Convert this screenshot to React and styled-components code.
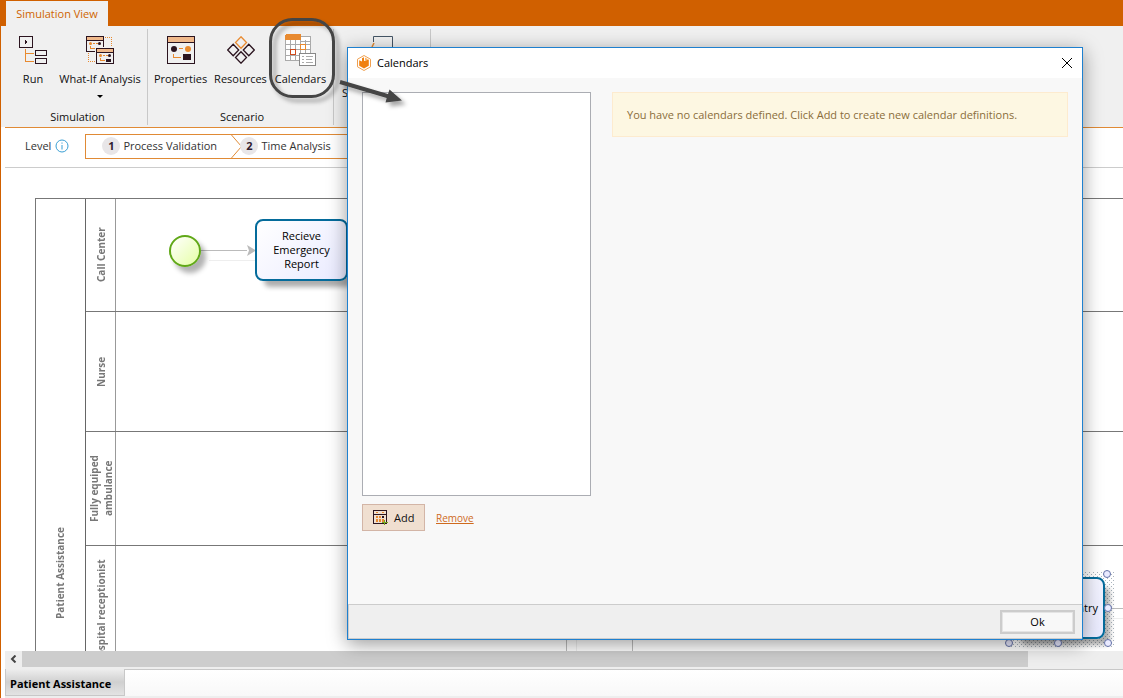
import React from 'react'
import styled, { createGlobalStyle, css } from 'styled-components'

const GlobalStyle = createGlobalStyle`
  * {
    box-sizing: border-box;
  }
  body {
    margin: 0;
    font-family: 'Open Sans', 'Noto Sans', sans-serif;
    font-size: 11px;
    line-height: 14px;
    color: #111;
    background: #fff;
  }
  button {
    font: inherit;
    color: inherit;
    padding: 0;
    border: 0;
    background: none;
  }
  svg {
    display: block;
  }
`

const Window = styled.div`
  position: relative;
  display: flex;
  flex-direction: column;
  height: 100vh;
  overflow: hidden;
  border-left: 1px solid #d06000;
`

const TitleBar = styled.header`
  display: flex;
  flex: none;
  align-items: flex-end;
  height: 26px;
  padding-left: 5px;
  background: #d06000;
`

const ViewTab = styled.button`
  width: 102px;
  height: 25px;
  background: #f0f0f0;
  color: #cf6400;
`

const Ribbon = styled.nav`
  display: flex;
  flex: none;
  height: 101px;
  padding: 3px 0 2px 4px;
  background: #f0f0f0;
`

const RibbonGroup = styled.section`
  display: flex;
  flex-direction: column;
  justify-content: space-between;
  width: ${props => props.$width}px;
  border-right: 1px solid #c8c8c8;
`

const GroupItems = styled.div`
  display: flex;
  justify-content: center;
`

const GroupName = styled.div`
  padding: 0 0 1px 3px;
  text-align: center;
`

const RibbonButton = styled.button`
  display: flex;
  flex-direction: column;
  align-items: center;
  justify-content: flex-start;
  width: ${props => props.$width}px;
  padding-top: 5px;
  white-space: nowrap;
`

const RibbonIcon = styled.span`
  display: flex;
  align-items: center;
  height: 32px;
`

const RibbonLabel = styled.span`
  margin-top: 6px;
  ${props => props.$second && css`
    align-self: flex-start;
    margin-top: 20px;
    padding-left: 8px;
  `}
`

const Caret = styled.i`
  margin-top: 9px;
  border: 3px solid transparent;
  border-top-color: #000;
  border-bottom: 0;
`

const Body = styled.main`
  display: flex;
  flex: 1;
  flex-direction: column;
  min-height: 0;
  margin-left: 4px;
  border-top: 1px solid #e08a35;
`

const LevelBar = styled.div`
  display: flex;
  flex: none;
  align-items: center;
  height: 40px;
  padding: 0 0 3px 20px;
  border-bottom: 1px solid #ccc;
  color: #333;
`

const Info = styled.button`
  margin: 0 16px 0 4px;
`

const Steps = styled.div`
  display: flex;
  width: 420px;
  height: 25px;
  border: 1px solid #e08a35;
`

const Step = styled.button`
  display: flex;
  align-items: center;
  gap: 3px;
  width: ${props => props.$width}px;
  padding-left: ${props => props.$inset}px;
`

const StepArrow = styled.svg`
  flex: none;
  margin-right: -3px;
`

const StepNumber = styled.b`
  width: 18px;
  height: 18px;
  border-radius: 50%;
  line-height: 18px;
  background: #e8e6e8;
  color: #302030;
`

const Canvas = styled.section`
  position: relative;
  flex: 1;
  min-height: 0;
  padding: 30px 0 0 30px;
  overflow: hidden;
`

const Pool = styled.div`
  display: flex;
  height: 750px;
  border: 1px solid #777;
  border-right: 0;
`

const UprightLabel = styled.div`
  display: flex;
  flex: none;
  align-items: center;
  justify-content: center;
  width: ${props => props.$width}px;
  border-left: 1px solid ${props => props.$edge || 'transparent'};
  writing-mode: vertical-rl;
  transform: rotate(180deg);
  font-size: 10px;
  font-weight: 700;
  text-align: center;
  white-space: pre;
  color: #777;
`

const Lanes = styled.div`
  flex: 1;
  border-left: 1px solid #666;
`

const Lane = styled.div`
  display: flex;
  height: ${props => props.$height}px;
  border-bottom: 1px solid #777;
`

const Flows = styled.svg`
  position: absolute;
  top: 0;
  left: 0;
  width: 100%;
  height: 100%;
`

const StartEvent = styled.div`
  position: absolute;
  left: 164px;
  top: 67px;
  width: 32px;
  height: 32px;
  border: 2px solid #60a817;
  border-radius: 50%;
  background: linear-gradient(135deg, #fff, #e5ffa5);
  box-shadow: 5px 6px 5px rgba(0, 0, 0, 0.3);
`

const Task = styled.div`
  position: absolute;
  left: ${props => props.$left}px;
  top: ${props => props.$top}px;
  display: flex;
  align-items: center;
  justify-content: center;
  width: 93px;
  height: 62px;
  padding: 0 8px;
  border: 2px solid #046b9b;
  border-radius: 8px;
  background: linear-gradient(135deg, #fff, #e9eaff);
  box-shadow: 7px 8px 5px -2px rgba(0, 0, 0, 0.32);
  text-align: center;
  color: #000;
  ${props => props.$end && css`
    justify-content: flex-end;
    padding-right: 5px;
  `}
`

const ScrollBar = styled.div`
  display: flex;
  flex: none;
  height: 16px;
  background: #eee;
`

const ScrollArrow = styled.button`
  display: flex;
  flex: none;
  align-items: center;
  justify-content: center;
  width: 17px;
`

const ScrollThumb = styled.div`
  width: 90%;
  background: #cdcdcd;
`

const SheetTabs = styled.footer`
  display: flex;
  flex: none;
  align-items: flex-start;
  height: 31px;
  padding-top: 2px;
  background: linear-gradient(#eee 2px, #c8c8c8 2px, #c8c8c8 3px, #fff 3px, #f8f8f8 29px, #eee 29px);
`

const SheetTab = styled.button`
  width: 120px;
  height: 27px;
  padding: 4px 0 0 4px;
  border: 1px solid #c8c8c8;
  border-top: 0;
  background: linear-gradient(#eee, #d0d0d0 50%, #e3e3e3);
  font-weight: 700;
  text-align: left;
  color: #000;
`

const Dialog = styled.div`
  position: absolute;
  top: 47px;
  right: 40px;
  bottom: 58px;
  left: 346px;
  display: flex;
  flex-direction: column;
  border: 1px solid #1e80cf;
  background: #f8f8f8;
  box-shadow: 0 4px 18px rgba(0, 0, 0, 0.4);
`

const DialogTitle = styled.div`
  display: flex;
  flex: none;
  align-items: center;
  gap: 6px;
  height: 30px;
  padding: 0 9px;
  background: #fff;
  color: #000;
`

const CloseButton = styled.button`
  margin-left: auto;
`

const DialogBody = styled.div`
  display: flex;
  flex: 1;
  gap: 21px;
  min-height: 0;
  padding: 14px;
`

const CalendarPane = styled.div`
  display: flex;
  flex: none;
  flex-direction: column;
  width: 229px;
  padding-bottom: 59px;
`

const CalendarList = styled.div`
  flex: 1;
  border: 1px solid #abadb3;
  background: #fff;
`

const ListActions = styled.div`
  display: flex;
  align-items: center;
  gap: 11px;
  margin-top: 8px;
`

const AddButton = styled.button`
  display: flex;
  align-items: center;
  gap: 6px;
  width: 63px;
  height: 27px;
  padding-left: 10px;
  border: 1px solid #d3b5a6;
  background: #f0dfd0;
`

const RemoveLink = styled.a`
  font-size: 10px;
  color: #cf6a1d;
`

const Notice = styled.p`
  flex: 1;
  height: 45px;
  margin: 0;
  padding: 15px 14px;
  border: 1px solid #fdebcf;
  background: #fdf7e2;
  color: #8a6d3b;
`

const DialogFooter = styled.div`
  display: flex;
  flex: none;
  justify-content: flex-end;
  height: 35px;
  padding: 5px 7px;
  border: 1px solid #ccc;
  border-right: 0;
  background: #efefef;
`

const OkButton = styled.button`
  width: 75px;
  height: 24px;
  border: 2px solid #ccc;
  outline: 1px solid #e4e4e4;
  outline-offset: -3px;
  background: #f8f8f8;
  color: #000;
`

const Callout = styled.svg`
  position: absolute;
  top: 0;
  left: 259px;
  pointer-events: none;
`

const dark = '#2b141f'
const orange = '#e88a30'

const RunIcon = () => (
  <svg width="28" height="28" viewBox="0 0 28 28" fill="none" stroke={dark} shapeRendering="crispEdges">
    <path d="M.5.5h13v11H.5zM16.500 14.500h11v5h-11zM16.500 22.500h11v5h-11z" />
    <path d="M6 4v4l2-2z" fill={dark} stroke="none" />
    <path d="M6.500 13v12.500H15M6.500 17.500H15" stroke={orange} />
  </svg>
)

const WindowGlyph = () => (
  <>
    <path d="M1 1h16v3H1z" fill="#f0b98b" />
    <path d="M.5.5h17v15H.5zM.5 4.500h17" fill="none" stroke={dark} shapeRendering="crispEdges" />
    <circle cx="4.500" cy="7.500" r="1.500" fill={orange} />
    <circle cx="13.500" cy="7.500" r="1.500" fill={dark} />
    <path d="M7 7.500h2m1 0h2M4.500 10v2.500H9" fill="none" stroke={orange} shapeRendering="crispEdges" />
    <path d="M10 11h5v3h-5z" fill={dark} />
  </>
)

const WhatIfIcon = () => (
  <svg width="28" height="28" viewBox="0 0 28 28">
    <WindowGlyph />
    <path d="M9 11h19v17H9z" fill="#f0f0f0" />
    <g transform="translate(10 12)">
      <WindowGlyph />
    </g>
    <path d="M19 1.500h6.500V11M2.500 17v8.500H9" fill="none" stroke={orange} strokeDasharray="1 1" shapeRendering="crispEdges" />
  </svg>
)

const PropertiesIcon = () => (
  <svg width="28" height="28" viewBox="0 0 28 28">
    <path d="M1 1h26v5H1z" fill="#f0b98b" />
    <path d="M.5.5h27v27H.5zM.5 6.500h27" fill="none" stroke={dark} shapeRendering="crispEdges" />
    <circle cx="7" cy="13" r="3" fill={dark} />
    <circle cx="21" cy="13" r="3" fill={orange} />
    <path d="M12 12.500h4M6.500 18v3.500H14" fill="none" stroke={orange} shapeRendering="crispEdges" />
    <path d="M16 18h8v6h-8z" fill={dark} />
  </svg>
)

const ResourcesIcon = () => (
  <svg width="28" height="28" viewBox="0 0 28 28" fill="none" stroke={dark} strokeWidth="1.300">
    <path d="M14 .8l5.500 5.700-5.500 5.700-5.500-5.700z" stroke={orange} />
    <path d="M6.200 8.300l5.500 5.700-5.500 5.700L.7 14zM21.800 8.300l5.500 5.700-5.500 5.700-5.500-5.700zM14 15.800l5.500 5.700-5.500 5.700-5.500-5.700z" />
  </svg>
)

const CalendarsIcon = () => (
  <svg width="32" height="32" viewBox="0 0 32 32" fill="none" stroke="#aaa" shapeRendering="crispEdges">
    <path d="M1 2h25v25H1z" fill="#fff" stroke="none" />
    <path d="M.5 6v20.500H14M.5 10.500h25M.5 15.500h25M.5 21.500h14M5.500 6v21M10.500 6v21M15.500 6v13M20.500 6v13M16 2.500h9.500V19M16 7.500h10" />
    <path d="M0 6V2q0-2 2-2h12q2 0 2 2v4z" fill="#e88a30" stroke="none" />
    <path d="M15.500 10.500h5v5h-5z" fill="#fff" stroke="#e88a30" />
    <path d="M5.500 15.500h5v5h-5z" fill="#fff" stroke="#cf4a1d" />
    <path d="M14.500 19.500h16v12h-16z" fill="#fff" stroke="#888" />
    <path d="M17 22.500h2m2 0h7M17 25.500h2m2 0h6M17 28.500h2m2 0h7" />
  </svg>
)

const BoardIcon = () => (
  <svg width="24" height="28" viewBox="0 0 24 28" fill="none">
    <path d="M2.500 6V.5h19V20" stroke="#456" />
    <path d="M3 7l-2 4" stroke={orange} strokeWidth="1.500" />
  </svg>
)

const InfoIcon = () => (
  <svg width="14" height="14" viewBox="0 0 14 14" fill="none" stroke="#3a9fd4">
    <circle cx="7" cy="7" r="6" />
    <path d="M7 6v4.500M7 3.500v1.200" />
  </svg>
)

const AppLogo = () => (
  <svg width="14" height="16" viewBox="0 0 14 16">
    <path d="M7 .5l6.500 3.700v7.600L7 15.500.5 11.800V4.200z" fill="#fff" stroke="#f0a050" />
    <path d="M2.200 5.200L5 6.500V3.200L7 2.300V6l4.800-1.500v6.300L7 13.600l-4.800-2.800z" fill="#f08010" />
    <path d="M8 2.500l3.500 2L8 5.500z" fill="#f9b870" />
  </svg>
)

const AddCalendarIcon = () => (
  <svg width="15" height="15" viewBox="0 0 15 15" fill="none" shapeRendering="crispEdges">
    <path d="M.5.5h13v13H.5zM.5 4.500h13" stroke={dark} />
    <path d="M3 2.500h2m4 0h2" stroke={orange} />
    <path d="M3 6h2v2H3zM6 6h2v2H6zM3 9h2v3H3zM6 9h2v3H6zM9 9h2v3H9z" fill={orange} />
    <path d="M9 6h2v2H9z" fill={dark} />
    <path d="M11.500 10v5M9 12.500h6" stroke="#74a824" />
  </svg>
)

const lanes = [
  { name: 'Call Center', height: 113 },
  { name: 'Nurse', height: 120 },
  { name: 'Fully equiped\nambulance', height: 114 },
  { name: 'Hospital receptionist', height: 132 }
]

const handles = [[1102, 406], [1103, 440], [1103, 475], [1053, 475], [1004, 475]]

const Diagram = () => (
  <Canvas>
    <Pool>
      <UprightLabel $width={49}>Patient Assistance</UprightLabel>
      <Lanes>
        {lanes.map(({ name, height }) => (
          <Lane key={name} $height={height}>
            <UprightLabel $width={30} $edge="#999">{name}</UprightLabel>
          </Lane>
        ))}
      </Lanes>
    </Pool>
    <Flows>
      <defs>
        <pattern id="dots" width="4" height="4" patternUnits="userSpaceOnUse">
          <path d="M0 0h1v1H0zM2 2h1v1H2z" fill="#aab4bd" />
        </pattern>
      </defs>
      <path d="M196 82.500h46M561.500 460v30M627.500 460v30M1100 440.500h100" stroke="#bbb" fill="none" />
      <path d="M204 92.500h46M571.500 460v30M1108 450.500h100" stroke="#eee" fill="none" />
      <path d="M242 77l9 5.500-9 5.500 2-5.500z" fill="#bbb" />
      <path d="M1004 403h106v77H1004z" fill="url(#dots)" />
    </Flows>
    <StartEvent />
    <Task $left={250} $top={51}>Recieve Emergency Report</Task>
    <Task $left={1007} $top={409} $end>entry</Task>
    <Flows>
      {handles.map(([x, y]) => (
        <circle key={`${x}-${y}`} cx={x} cy={y} r="3.500" fill="#e9eaff" stroke="#6472a8" />
      ))}
    </Flows>
  </Canvas>
)

const CalendarsDialog = () => (
  <Dialog role="dialog" aria-labelledby="dialog-title">
    <DialogTitle>
      <AppLogo />
      <span id="dialog-title">Calendars</span>
      <CloseButton aria-label="Close">
        <svg width="12" height="12" viewBox="0 0 12 12" stroke="#000">
          <path d="M1 1l10 10M11 1L1 11" />
        </svg>
      </CloseButton>
    </DialogTitle>
    <DialogBody>
      <CalendarPane>
        <CalendarList role="listbox" aria-label="Calendars" />
        <ListActions>
          <AddButton>
            <AddCalendarIcon />
            Add
          </AddButton>
          <RemoveLink href="#remove">Remove</RemoveLink>
        </ListActions>
      </CalendarPane>
      <Notice>You have no calendars defined. Click Add to create new calendar definitions.</Notice>
    </DialogBody>
    <DialogFooter>
      <OkButton>Ok</OkButton>
    </DialogFooter>
  </Dialog>
)

const App = () => (
  <Window>
    <GlobalStyle />
    <TitleBar>
      <ViewTab>Simulation View</ViewTab>
    </TitleBar>
    <Ribbon>
      <RibbonGroup $width={143}>
        <GroupItems>
          <RibbonButton $width={48}>
            <RibbonIcon><RunIcon /></RibbonIcon>
            <RibbonLabel>Run</RibbonLabel>
          </RibbonButton>
          <RibbonButton $width={86}>
            <RibbonIcon><WhatIfIcon /></RibbonIcon>
            <RibbonLabel>What-If Analysis</RibbonLabel>
            <Caret />
          </RibbonButton>
        </GroupItems>
        <GroupName>Simulation</GroupName>
      </RibbonGroup>
      <RibbonGroup $width={186}>
        <GroupItems>
          <RibbonButton $width={60}>
            <RibbonIcon><PropertiesIcon /></RibbonIcon>
            <RibbonLabel>Properties</RibbonLabel>
          </RibbonButton>
          <RibbonButton $width={60}>
            <RibbonIcon><ResourcesIcon /></RibbonIcon>
            <RibbonLabel>Resources</RibbonLabel>
          </RibbonButton>
          <RibbonButton $width={60}>
            <RibbonIcon><CalendarsIcon /></RibbonIcon>
            <RibbonLabel>Calendars</RibbonLabel>
          </RibbonButton>
        </GroupItems>
        <GroupName>Scenario</GroupName>
      </RibbonGroup>
      <RibbonGroup $width={97}>
        <RibbonButton $width={97}>
          <RibbonIcon><BoardIcon /></RibbonIcon>
          <RibbonLabel $second>S</RibbonLabel>
        </RibbonButton>
      </RibbonGroup>
    </Ribbon>
    <Body>
      <LevelBar>
        Level
        <Info aria-label="About levels"><InfoIcon /></Info>
        <Steps>
          <Step $width={145} $inset={16}>
            <StepNumber>1</StepNumber>
            Process Validation
          </Step>
          <StepArrow width="12" height="23" viewBox="0 0 12 23" fill="none" stroke="#e08a35">
            <path d="M.5 0l10 11.500L.5 23" />
          </StepArrow>
          <Step $width={120} $inset={0}>
            <StepNumber>2</StepNumber>
            Time Analysis
          </Step>
        </Steps>
      </LevelBar>
      <Diagram />
      <ScrollBar>
        <ScrollArrow aria-label="Scroll left">
          <svg width="7" height="8" viewBox="0 0 7 8" fill="none" stroke="#444" strokeWidth="2">
            <path d="M5.500 .5L2 4l3.500 3.500" />
          </svg>
        </ScrollArrow>
        <ScrollThumb />
      </ScrollBar>
      <SheetTabs>
        <SheetTab>Patient Assistance</SheetTab>
      </SheetTabs>
    </Body>
    <CalendarsDialog />
    <Callout width="160" height="120" viewBox="0 0 160 120">
      <defs>
        <filter id="drop" x="-20%" y="-20%" width="150%" height="150%">
          <feDropShadow dx="4" dy="4" stdDeviation="2" floodOpacity=".35" />
        </filter>
      </defs>
      <g filter="url(#drop)">
        <rect x="10.500" y="19.500" width="63" height="77" rx="22" fill="none" stroke="#444" strokeWidth="3" />
        <path d="M80.500 80l47.500 14 1.500-4.500L142 100.500l-16.500 2 1.200-4.500L79.500 84z" fill="#444" />
      </g>
    </Callout>
  </Window>
)

export default App
